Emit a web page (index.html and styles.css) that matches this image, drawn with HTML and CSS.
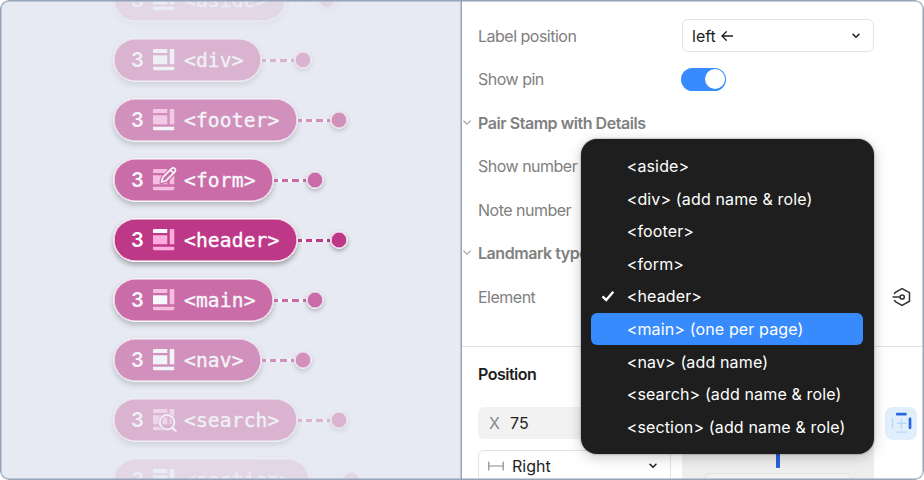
FILE: index.html
```html
<!DOCTYPE html>
<html lang="en">
<head>
<meta charset="utf-8">
<title>Landmark stamp properties</title>
<link rel="stylesheet" href="styles.css">
</head>
<body>
<svg width="0" height="0" class="defs">
  <defs>
    <g id="i-top"><path d="M1.3 0H14.3V4H0V1.3Q0 0 1.3 0Z"/></g>
    <g id="i-mid"><path d="M0 6.3H14.3V15.3H0Z"/></g>
    <g id="i-side"><path d="M16.7 0H20Q21.3 0 21.3 1.3V15.3H16.7Z"/></g>
    <g id="i-bot"><path d="M0 17.8H21.3V20Q21.3 21.3 20 21.3H1.3Q0 21.3 0 20Z"/></g>
  </defs>
</svg>
<main class="frame">
  <section class="canvas">
    <div class="stamp o10"><div class="pill"><span class="num">3</span><svg class="icon" viewBox="0 0 24 24"><use href="#i-top"/><use href="#i-mid"/><use href="#i-side"/><use href="#i-bot"/></svg><span class="tag">&lt;aside&gt;</span></div><i class="line"></i><i class="pin"></i></div>
    <div class="stamp o30"><div class="pill"><span class="num">3</span><svg class="icon" viewBox="0 0 24 24"><use href="#i-top"/><use href="#i-mid"/><use href="#i-side"/><use href="#i-bot"/></svg><span class="tag">&lt;div&gt;</span></div><i class="line"></i><i class="pin"></i></div>
    <div class="stamp o50"><div class="pill"><span class="num">3</span><svg class="icon" viewBox="0 0 24 24"><use class="dim" href="#i-top"/><use class="dim" href="#i-mid"/><use class="dim" href="#i-side"/><use href="#i-bot"/></svg><span class="tag">&lt;footer&gt;</span></div><i class="line"></i><i class="pin"></i></div>
    <div class="stamp o70"><div class="pill"><span class="num">3</span><svg class="icon" viewBox="0 0 24 24"><use class="dim" href="#i-top"/><use class="dim" href="#i-mid"/><use class="dim" href="#i-side"/><use class="dim" href="#i-bot"/><path class="knock" d="M8.5 13.2 9.8 8.4 19 -.8Q20.5 -2 22 -.5T22.4 2.6L13.2 11.8Z"/><path class="pencil" d="M8.5 13 9.8 8.4 18.8 -.6Q20.4 -1.9 21.8 -.5T22.1 2.6L13.1 11.7ZM17.3 1 20.6 4.2"/></svg><span class="tag">&lt;form&gt;</span></div><i class="line"></i><i class="pin"></i></div>
    <div class="stamp"><div class="pill"><span class="num">3</span><svg class="icon" viewBox="0 0 24 24"><use href="#i-top"/><use class="dim" href="#i-mid"/><use class="dim" href="#i-side"/><use class="dim" href="#i-bot"/></svg><span class="tag">&lt;header&gt;</span></div><i class="line"></i><i class="pin"></i></div>
    <div class="stamp o70"><div class="pill"><span class="num">3</span><svg class="icon" viewBox="0 0 24 24"><use class="dim" href="#i-top"/><use href="#i-mid"/><use class="dim" href="#i-side"/><use class="dim" href="#i-bot"/></svg><span class="tag">&lt;main&gt;</span></div><i class="line"></i><i class="pin"></i></div>
    <div class="stamp o50"><div class="pill"><span class="num">3</span><svg class="icon" viewBox="0 0 24 24"><use href="#i-top"/><use href="#i-mid"/><use href="#i-side"/><use href="#i-bot"/></svg><span class="tag">&lt;nav&gt;</span></div><i class="line"></i><i class="pin"></i></div>
    <div class="stamp o30"><div class="pill"><span class="num">3</span><svg class="icon" viewBox="0 0 24 24"><use class="dim" href="#i-top"/><use class="dim" href="#i-mid"/><use class="dim" href="#i-side"/><use class="dim" href="#i-bot"/><circle class="knock" cx="14" cy="13.2" r="7"/><path class="glass" d="M11 8.5h3.3v6.8H9.5v-4zM16.5 8.5l2 2v4.8h-2z"/><circle class="lens" cx="14" cy="13.2" r="7.3"/><path class="lens" d="M19.3 18.5 23.4 22.6"/></svg><span class="tag">&lt;search&gt;</span></div><i class="line"></i><i class="pin"></i></div>
    <div class="stamp o10"><div class="pill"><span class="num">3</span><svg class="icon" viewBox="0 0 24 24"><use href="#i-top"/><use href="#i-mid"/><use href="#i-side"/><use href="#i-bot"/></svg><span class="tag">&lt;section&gt;</span></div><i class="line"></i><i class="pin"></i></div>
  </section>

  <section class="panel">
    <div class="props">
      <div class="row"><span class="label">Label position</span>
        <div class="select"><span>left</span><svg class="arrow" viewBox="0 0 12 12"><path d="M11.5 6H1M5.3 1.7 1 6l4.3 4.3"/></svg><svg class="chev" viewBox="0 0 8 6"><path d="M1 1.3 4 4.3 7 1.3"/></svg></div>
      </div>
      <div class="row"><span class="label">Show pin</span><span class="toggle"></span></div>
      <div class="row head"><svg class="fold" viewBox="0 0 8 6"><path d="M.8 1 4 4.2 7.2 1"/></svg><span>Pair Stamp with Details</span></div>
      <div class="row"><span class="label">Show number</span></div>
      <div class="row"><span class="label">Note number</span></div>
      <div class="row head"><svg class="fold" viewBox="0 0 8 6"><path d="M.8 1 4 4.2 7.2 1"/></svg><span>Landmark type</span></div>
      <div class="row"><span class="label">Element</span><svg class="hex" viewBox="0 0 20 20"><path d="M2.5 6.4 3.8 5.2 10 1.6 17.5 5.6V14.2L10 18.3 3.8 14.8 2.5 13.6M1 10H8"/><circle cx="10.2" cy="10" r="2.1"/></svg></div>
    </div>
    <div class="position">
      <h2>Position</h2>
      <div class="fields">
        <div class="inputs">
          <div class="input"><span class="axis">X</span><span>75</span></div>
          <div class="select side"><svg class="span" viewBox="0 0 16 10"><path d="M.8 1V9M15.2 1V9M.8 5H15.2"/></svg><span>Right</span><svg class="chev" viewBox="0 0 8 6"><path d="M1 1.3 4 4.3 7 1.3"/></svg></div>
        </div>
        <div class="anchor"><i class="tick"></i><div class="box"></div></div>
        <div class="pinbtn"><svg viewBox="0 0 32 32"><path class="soft" d="M7.5 11.5V20.5M12 25.2H21M16.3 12V20.8M11.8 16.3H20.8"/><path class="strong" d="M12.2 7.2H20.5M25 11.8V20.8"/></svg></div>
      </div>
    </div>
    <ul class="menu">
      <li>&lt;aside&gt;</li>
      <li>&lt;div&gt; (add name &amp; role)</li>
      <li>&lt;footer&gt;</li>
      <li>&lt;form&gt;</li>
      <li><svg class="check" viewBox="0 0 14 12"><path d="M1.5 6.3 5.2 10 12.3 1.8"/></svg>&lt;header&gt;</li>
      <li class="active">&lt;main&gt; (one per page)</li>
      <li>&lt;nav&gt; (add name)</li>
      <li>&lt;search&gt; (add name &amp; role)</li>
      <li>&lt;section&gt; (add name &amp; role)</li>
    </ul>
  </section>
</main>
</body>
</html>
```
FILE: styles.css
```css
* { box-sizing: border-box; }
body { margin: 0; background: #fff; font-family: Inter, sans-serif; font-size: 16px; color: #1e1e1e; }
.defs { position: absolute; }
.frame { position: relative; display: flex; width: 924px; height: 480px; overflow: hidden; border-radius: 9px; background: #fff; }
.frame::after { content: ""; position: absolute; inset: 0; border: 1px solid #94a3b8; box-shadow: inset 0 0 0 .5px #94a3b8; border-radius: 9px; pointer-events: none; }

.canvas { flex: none; width: 462px; height: 480px; padding-left: 113px; display: flex; flex-direction: column; gap: 16px; overflow: hidden; background: #e7eaf2; border-right: 1px solid #94a3b8; box-shadow: inset -.5px 0 0 #94a3b8; }
.canvas .stamp:first-child { margin-top: -22px; }
.stamp { flex: none; display: flex; align-items: center; height: 44px; }
.pill { display: flex; align-items: center; height: 44px; padding: 0 17.5px 0 17px; border: 1px solid #fff; border-radius: 22px; background: #be3888; color: #fff; box-shadow: inset 0 0 0 .6px #fff, 0 3px 5px rgba(0, 0, 0, .3); }
.num { width: 22px; font-size: 20px; font-weight: 600; line-height: 24px; }
.icon { width: 24px; height: 24px; margin: 2px 7px 0 0; overflow: visible; fill: #fff; }
.dim { fill: #ffabdb; }
.knock { fill: #be3888; stroke: #be3888; stroke-width: 4; stroke-linejoin: round; }
.pencil { fill: #be3888; stroke: #fff; stroke-width: 1.7; stroke-linejoin: round; }
.lens { fill: none; stroke: #fff; stroke-width: 2; }
.glass { fill: #ffabdb; }
.tag { font: 19.6px/24px "DejaVu Sans Mono", monospace; letter-spacing: .13px; padding-top: 1px; -webkit-text-stroke: .35px #fff; }
.line { width: 33px; height: 3px; background: repeating-linear-gradient(90deg, #be3888 0 3.7px, #fff 3.7px 8px, #be3888 8px 14.4px, #fff 14.4px 18.4px, #be3888 18.4px 24.8px, #fff 24.8px 28.8px, #be3888 28.8px 33px); }
.pin { width: 18px; height: 18px; margin-left: -1px; border: 1px solid #fff; border-radius: 50%; background: #be3888; box-shadow: inset 0 0 0 .6px #fff, 0 2px 4px rgba(0, 0, 0, .3); }
.o10 { opacity: .1; }
.o30 { opacity: .3; }
.o50 { opacity: .5; }
.o70 { opacity: .7; }

.panel { position: relative; flex: 1; min-width: 0; }
.props { height: 346px; padding: 14px 12px 0 16px; }
.row { display: flex; align-items: center; height: 43.5px; }
.label { width: 204px; color: #808080; letter-spacing: -.5px; }
.head { margin-left: -16px; font-weight: 600; color: #808080; letter-spacing: -.45px; }
.fold { width: 8px; height: 6px; margin: 0 7px 0 1px; }
svg path { stroke-linecap: round; }
.icon path { stroke-linecap: butt; }
.fold path { fill: none; stroke: #aaa; stroke-width: 1.2; }
.select { display: flex; align-items: center; width: 192px; height: 33px; padding: 0 13px 0 9px; border: 1px solid #e3e3e3; border-radius: 6px; }
.arrow { width: 12px; height: 12px; margin-left: 5px; }
.arrow path { fill: none; stroke: #1e1e1e; stroke-width: 1.3; }
.chev { width: 8px; height: 6px; margin-left: auto; }
.chev path { fill: none; stroke: #1e1e1e; stroke-width: 1.5; }
.toggle { width: 45px; height: 23px; padding: 1.5px; border-radius: 12px; background: #388bfd; display: flex; justify-content: flex-end; margin-left: -1px; }
.toggle::after { content: ""; width: 20px; height: 20px; border-radius: 50%; background: #fff; }
.hex { width: 20px; height: 20px; margin-left: auto; }
.hex path, .hex circle { fill: none; stroke: #333; stroke-width: 1.5; }

.position { padding: 0 6px 0 16px; border-top: 1px solid #e3e3e3; }
h2 { margin: 0; height: 59.5px; padding-top: 2px; font-size: 16px; font-weight: 600; line-height: 50px; letter-spacing: -.5px; }
.fields { display: flex; gap: 11px; align-items: flex-start; }
.inputs { display: flex; flex-direction: column; gap: 11px; width: 193px; }
.input { display: flex; align-items: center; height: 32px; padding-left: 11px; border-radius: 6px; background: #f2f2f2; }
.axis { width: 21px; color: #888; }
.side { width: 193px; height: 32px; }
.span { width: 16px; height: 10px; margin-right: 8px; }
.span path { fill: none; stroke: #888; stroke-width: 1.2; }
.anchor { display: flex; flex-direction: column; align-items: center; width: 192px; height: 80px; padding-top: 44px; border-radius: 6px; background: #eee; }
.tick { flex: none; width: 4px; height: 17px; border-radius: 1px; background: #2563d9; }
.box { flex: none; width: 148px; height: 30px; margin-top: 5px; border: 1px solid #e2e2e2; border-radius: 6px; background: #f1f1f1; }
.pinbtn { width: 32px; height: 33px; border-radius: 8px; background: #e1effc; }
.pinbtn svg { display: block; width: 32px; height: 32px; }
.soft { fill: none; stroke: #b4d6fb; stroke-width: 1.2; }
.strong { fill: none; stroke: #2468da; stroke-width: 2.7; }

.menu { position: absolute; left: 118.7px; top: 139px; width: 293px; height: 315px; margin: 0; padding: 10.8px 10.5px; list-style: none; border-radius: 16px; background: #1e1e1e; color: #fff; letter-spacing: .14px; box-shadow: 0 3px 14px rgba(0, 0, 0, .22), 0 0 2px rgba(0, 0, 0, .5); }
.menu li { display: flex; align-items: center; height: 32.6px; padding-left: 35.5px; border-radius: 6px; }
.menu .active { background: #388bfd; }
.check { width: 14px; height: 12px; margin: 0 12px 0 -26px; }
.check path { fill: none; stroke: #fff; stroke-width: 2.4; stroke-linecap: butt; }
```
